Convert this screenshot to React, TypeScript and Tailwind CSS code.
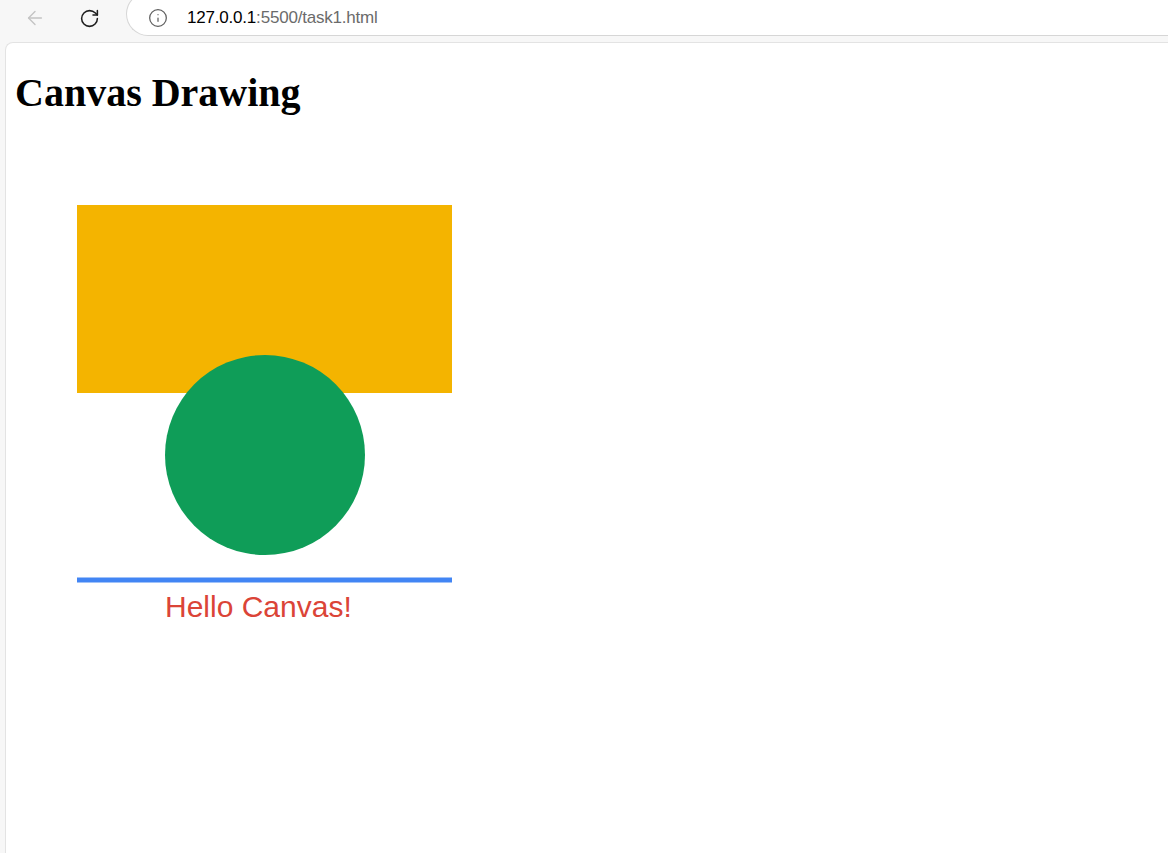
import { ArrowLeft, RotateCw, Info } from "lucide-react";

function BrowserBar() {
  return (
    <div className="flex h-[42px] items-start bg-[#f7f7f7]">
      <div className="flex h-[36px] w-[126px] shrink-0 items-center">
        <ArrowLeft className="ml-[24px] h-[22px] w-[22px] text-[#c4c4c4]" strokeWidth={1.5} />
        <RotateCw className="ml-[33px] h-[21px] w-[21px] text-[#1f1f1f]" strokeWidth={1.75} />
      </div>
      <div className="-mt-[8px] flex h-[44px] flex-1 items-center rounded-l-full border border-r-0 border-[#d6d6d6] bg-white pt-[8px]">
        <Info className="ml-[21px] h-[20px] w-[20px] text-[#5f5f5f]" strokeWidth={1.5} />
        <span className="ml-[19px] font-['Liberation_Sans',Arial,sans-serif] text-[17px] tracking-[-0.2px]">
          <span className="text-black">127.0.0.1</span>
          <span className="text-[#6b6b6b]">:5500/task1.html</span>
        </span>
      </div>
    </div>
  );
}

function CanvasDrawing() {
  return (
    <svg width="470" height="500" viewBox="0 0 470 500" className="block">
      <rect x="62" y="63" width="375" height="188" fill="#f4b400" />
      <circle cx="250" cy="313" r="100" fill="#0f9d58" />
      <line x1="62" y1="438" x2="437" y2="438" stroke="#4285f4" strokeWidth="5" />
      <text
        x="150"
        y="475"
        fill="#db4437"
        fontSize="30"
        fontFamily="'Liberation Sans', Arial, sans-serif"
      >
        Hello Canvas!
      </text>
    </svg>
  );
}

export default function App() {
  return (
    <div className="flex h-[853px] w-[1168px] flex-col overflow-hidden bg-[#f7f7f7]">
      <BrowserBar />
      <main className="ml-[5px] flex-1 rounded-tl-[8px] border-l border-t border-[#e3e3e3] bg-white px-[9px]">
        <h1 className="mb-[26px] mt-[27px] font-['Liberation_Serif','Times_New_Roman',serif] text-[40px] font-bold leading-[46px] text-black">
          Canvas Drawing
        </h1>
        <CanvasDrawing />
      </main>
    </div>
  );
}
